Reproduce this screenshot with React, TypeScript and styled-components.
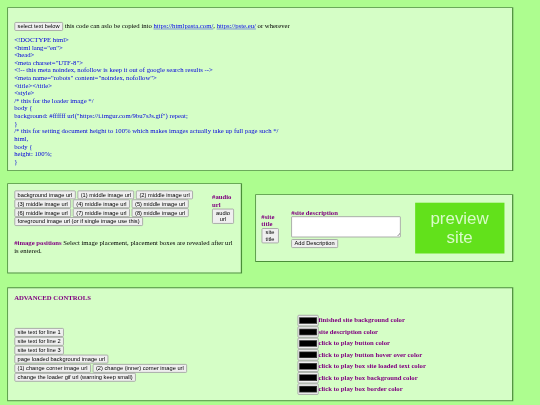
import React from "react";
import styled, { createGlobalStyle } from "styled-components";

const Global = createGlobalStyle`
  html, body { margin: 0; padding: 0; background: #adfd8f; }
  body { font-family: "Liberation Serif", serif; }
`;

const Frame = styled.div`
  width: 540px;
  height: 405px;
  overflow: hidden;
`;

/* The reference is a 1276px wide page photographed at 42.32%: the page is laid out at its own size and scaled once. */
const Page = styled.div`
  box-sizing: border-box;
  width: 1276px;
  height: 957px;
  padding: 16.5px 0 0 16.5px;
  display: flex;
  flex-direction: column;
  transform: scale(0.4232);
  transform-origin: 0 0;
  filter: blur(0.7px);
  font-size: 15.85px;
  line-height: 18px;
  color: #000;
`;

const Panel = styled.section<{ $w: number; $h: number }>`
  box-sizing: border-box;
  width: ${(p) => p.$w}px;
  height: ${(p) => p.$h}px;
  flex: none;
  background: #d5fec6;
  border: 2px solid #4a8f38;
  border-right-width: 3px;
`;

const CodePanel = styled(Panel)`
  padding: 33px 15px 0;
`;

const Intro = styled.div`
  margin-bottom: 12px;
  white-space: pre;
`;

const Link = styled.a`
  color: #0000ee;
  text-decoration: underline;
`;

const Code = styled.pre`
  margin: 0;
  font: inherit;
  color: #0000dd;
  white-space: pre;
`;

const Btn = styled.button`
  box-sizing: border-box;
  font-family: "Liberation Sans", sans-serif;
  font-size: 13.45px;
  line-height: 15px;
  height: 21px;
  padding: 1px 6px;
  margin: 0;
  color: #000;
  background: #efefef;
  border: 2px solid #a0a0a0;
  border-radius: 3px;
  white-space: nowrap;
  flex: none;
`;

const TallBtn = styled(Btn)<{ $w: number }>`
  display: block;
  width: ${(p) => p.$w}px;
  height: 36px;
  padding: 1px 2px;
  white-space: normal;
  text-align: center;
`;

const Row = styled.div`
  display: flex;
  align-items: center;
  gap: 31px;
  margin-top: 29px;
`;

const ImagesPanel = styled(Panel)`
  padding: 15px 15px 0;
`;

const ImagesTop = styled.div`
  display: flex;
`;

const BtnGrid = styled.div<{ $w?: number }>`
  width: ${(p) => (p.$w ? `${p.$w}px` : "auto")};
  flex: none;
  display: flex;
  flex-direction: column;
  align-items: flex-start;
`;

const BtnLine = styled.div`
  display: flex;
  gap: 4px;
  height: 21.3px;
`;

const Label = styled.b`
  display: block;
  color: #800080;
`;

const AudioCol = styled.div`
  width: 52px;
  padding-top: 7px;
`;

const Inline = styled.b`
  color: #800080;
`;

const Note = styled.p`
  margin: 30px 0 0;
`;

const SitePanel = styled(Panel)`
  display: flex;
  align-items: center;
  padding: 0 0 0 13px;
`;

const TitleCol = styled.div`
  width: 70.5px;
  flex: none;
`;

const DescCol = styled.div`
  width: 292.5px;
  flex: none;
`;

const Area = styled.textarea`
  box-sizing: border-box;
  display: block;
  width: 259px;
  height: 50px;
  margin: 0 0 4px;
  padding: 2px;
  background: #fff;
  border: 2px solid #a0a0a0;
  border-radius: 2px;
`;

const Preview = styled.div`
  width: 211px;
  height: 120px;
  flex: none;
  background: #62e11b;
  color: #d8fbc8;
  font-family: "Liberation Sans", sans-serif;
  font-size: 40px;
  line-height: 45px;
  display: flex;
  align-items: center;
  text-align: center;
  justify-content: center;
`;

const AdvPanel = styled(Panel)`
  margin-top: 33px;
  display: flex;
  padding: 13px 15px 0;
`;

const AdvLeft = styled.div`
  width: 669px;
  flex: none;
`;

const Heading = styled.b`
  display: block;
  color: #800080;
  margin-bottom: 63px;
`;

const AdvRight = styled.div`
  padding-top: 50px;
  display: flex;
  flex-direction: column;
`;

const ColorRow = styled.div`
  display: flex;
  align-items: center;
  height: 27px;
`;

const Swatch = styled.input`
  box-sizing: border-box;
  width: 50px;
  height: 27px;
  margin: 0;
  padding: 0;
  background: #efefef;
  border: 2px solid #a0a0a0;
  border-radius: 3px;
  flex: none;
`;

const ColorText = styled.b`
  color: #800080;
`;

const code = `<!DOCTYPE html>
<html lang="en">
<head>
<meta charset="UTF-8">
<!-- this meta noindex, nofollow is keep it out of google search results -->
<meta name="robots" content="noindex, nofollow">
<title></title>
<style>
/* this for the loader image */
body {
background: #ffffff url("https://i.imgur.com/9bu7sJs.gif") repeat;
}
/* this for setting document height to 100% which makes images actually take up full page such */
html,
body {
height: 100%;
}`;

const imageRows = [
  ["background image url", "(1) middle image url", "(2) middle image url"],
  ["(3) middle image url", "(4) middle image url", "(5) middle image url"],
  ["(6) middle image url", "(7) middle image url", "(8) middle image url"],
  ["foreground image url (or if single image use this)"],
];

const advRows = [
  ["site text for line 1"],
  ["site text for line 2"],
  ["site text for line 3"],
  ["page loaded background image url"],
  ["(1) change corner image url", "(2) change (inner) corner image url"],
  ["change the loader gif url (warning keep small)"],
];

const colors = [
  "finished site background color",
  "site description color",
  "click to play button color",
  "click to play button hover over color",
  "click to play box site loaded text color",
  "click to play box background color",
  "click to play box border color",
];

const Buttons = ({ rows, w }: { rows: string[][]; w?: number }) => (
  <BtnGrid $w={w}>
    {rows.map((r, i) => (
      <BtnLine key={i}>
        {r.map((t) => (
          <Btn key={t}>{t}</Btn>
        ))}
      </BtnLine>
    ))}
  </BtnGrid>
);

export default function App() {
  return (
    <Frame>
      <Global />
      <Page>
        <CodePanel $w={1196} $h={387}>
          <Intro>
            <Btn>select text below</Btn> this code can aslo be copied into <Link>https://htmlpasta.com/</Link>, <Link>https://pste.eu/</Link> or wherever
          </Intro>
          <Code>{code}</Code>
        </CodePanel>
        <Row>
          <ImagesPanel $w={555} $h={213}>
            <ImagesTop>
              <Buttons rows={imageRows} w={467.5} />
              <AudioCol>
                <Label>#audio url</Label>
                <TallBtn $w={52}>audio url</TallBtn>
              </AudioCol>
            </ImagesTop>
            <Note>
              <Inline>#image positions</Inline> Select image placement, placement boxes are revealed after url is entered.
            </Note>
          </ImagesPanel>
          <SitePanel $w={610} $h={160}>
            <TitleCol>
              <Label>#site<br />title</Label>
              <TallBtn $w={41}>site title</TallBtn>
            </TitleCol>
            <DescCol>
              <Label>#site description</Label>
              <Area />
              <Btn>Add Description</Btn>
            </DescCol>
            <Preview>preview<br />site</Preview>
          </SitePanel>
        </Row>
        <AdvPanel $w={1196} $h={269}>
          <AdvLeft>
            <Heading>ADVANCED CONTROLS</Heading>
            <Buttons rows={advRows} />
          </AdvLeft>
          <AdvRight>
            {colors.map((c) => (
              <ColorRow key={c}>
                <Swatch type="color" defaultValue="#000000" />
                <ColorText>{c}</ColorText>
              </ColorRow>
            ))}
          </AdvRight>
        </AdvPanel>
      </Page>
    </Frame>
  );
}
